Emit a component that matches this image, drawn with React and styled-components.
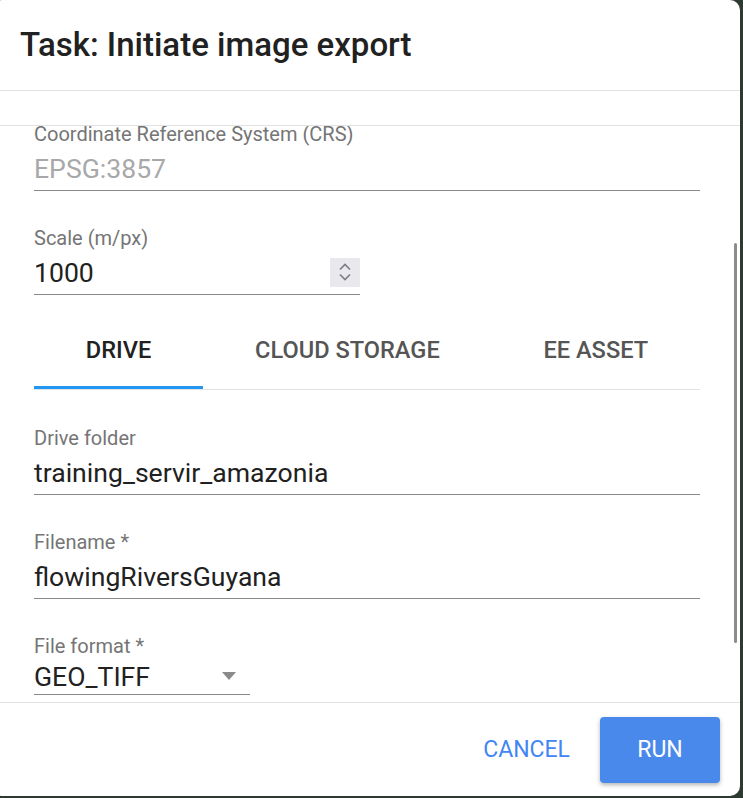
import styled, { createGlobalStyle } from "styled-components";

const GlobalStyle = createGlobalStyle`
  html, body {
    margin: 0;
    padding: 0;
    background: #2c3a31;
    font-family: Roboto, "Liberation Sans", sans-serif;
  }
`;

const fields = [
  { label: "Drive folder", value: "training_servir_amazonia" },
  { label: "Filename *", value: "flowingRiversGuyana" },
];

const tabs = ["DRIVE", "CLOUD STORAGE", "EE ASSET"];

export default function App() {
  return (
    <>
      <GlobalStyle />
      <Screen>
        <Dialog>
          <Header>
            <Title>Task: Initiate image export</Title>
          </Header>
          <Gap />
          <Body>
            <Scroller>
              <Field>
                <Label>Coordinate Reference System (CRS)</Label>
                <ValueRow>
                  <Value $disabled>EPSG:3857</Value>
                </ValueRow>
              </Field>

              <Field $narrow>
                <Label>Scale (m/px)</Label>
                <ValueRow>
                  <Value>1000</Value>
                  <Spinner>
                    <svg width="16" height="24" viewBox="0 0 16 24">
                      <path d="M3 9.5 L8 4.5 L13 9.5" fill="none" stroke="#7d7d85" strokeWidth="1.7" />
                      <path d="M3 14.5 L8 19.5 L13 14.5" fill="none" stroke="#7d7d85" strokeWidth="1.7" />
                    </svg>
                  </Spinner>
                </ValueRow>
              </Field>

              <TabBar>
                {tabs.map((t, i) => (
                  <Tab key={t} $active={i === 0}>
                    {t}
                  </Tab>
                ))}
              </TabBar>

              {fields.map((f) => (
                <Field key={f.label}>
                  <Label>{f.label}</Label>
                  <ValueRow>
                    <Value>{f.value}</Value>
                  </ValueRow>
                </Field>
              ))}

              <Field $select>
                <Label>File format *</Label>
                <SelectRow>
                  <Value>GEO_TIFF</Value>
                  <Arrow />
                </SelectRow>
              </Field>
            </Scroller>
            <ScrollThumb />
          </Body>
          <Footer>
            <TextButton>CANCEL</TextButton>
            <RunButton>RUN</RunButton>
          </Footer>
        </Dialog>
      </Screen>
    </>
  );
}

const Screen = styled.div`
  width: 743px;
  height: 798px;
  overflow: hidden;
  display: flex;
`;

const Dialog = styled.div`
  margin: 0 0 2px -8px;
  width: 748px;
  height: 796px;
  background: #ffffff;
  border-radius: 10px;
  overflow: hidden;
  display: flex;
  flex-direction: column;
  flex-shrink: 0;
`;

const Header = styled.div`
  height: 91px;
  box-sizing: border-box;
  padding-left: 28px;
  display: flex;
  align-items: center;
  border-bottom: 1px solid #e2e2e2;
`;

const Title = styled.h1`
  margin: 0;
  font-size: 33px;
  font-weight: 500;
  color: #212121;
  padding-bottom: 2px;
`;

const Gap = styled.div`
  height: 34px;
  flex-shrink: 0;
  border-bottom: 1px solid #e2e2e2;
`;

const Body = styled.div`
  flex: 1;
  position: relative;
  overflow: hidden;
  padding: 0 40px 0 42px;
`;

/* content is scrolled a few px down, so the first label sits under the edge */
const Scroller = styled.div`
  margin-top: -4px;
  display: flex;
  flex-direction: column;
`;

const Field = styled.div`
  width: ${(p) => (p.$narrow ? "326px" : p.$select ? "216px" : "100%")};
  margin-bottom: 35px;
`;

const Label = styled.div`
  height: 24px;
  line-height: 24px;
  font-size: 20px;
  color: #757575;
  white-space: nowrap;
`;

const ValueRow = styled.div`
  height: 44px;
  display: flex;
  align-items: center;
  justify-content: space-between;
  border-bottom: 1px solid #8a8a8a;
`;

const SelectRow = styled(ValueRow)`
  height: 36px;
`;

const Value = styled.div`
  font-size: 26.6px;
  color: ${(p) => (p.$disabled ? "#a8a8a8" : "#212121")};
  white-space: nowrap;
`;

const Spinner = styled.div`
  width: 30px;
  height: 29px;
  background: #e9e9ed;
  display: flex;
  align-items: center;
  justify-content: center;
`;

const Arrow = styled.div`
  width: 0;
  height: 0;
  margin-right: 14px;
  border-left: 7px solid transparent;
  border-right: 7px solid transparent;
  border-top: 8px solid #8a8a8a;
`;

const TabBar = styled.div`
  display: flex;
  margin-top: -19px;
  margin-bottom: 36px;
  border-bottom: 1px solid #e2e2e2;
`;

const Tab = styled.div`
  flex: 1 1 auto;
  height: 78px;
  box-sizing: border-box;
  display: flex;
  align-items: center;
  justify-content: center;
  padding-top: 2px;
  font-size: 23.6px;
  font-weight: 500;
  color: ${(p) => (p.$active ? "#212121" : "#555555")};
  border-bottom: 3px solid ${(p) => (p.$active ? "#2196f3" : "transparent")};
`;

const ScrollThumb = styled.div`
  position: absolute;
  right: 3px;
  top: 117px;
  width: 3px;
  height: 400px;
  background: #8c8c8c;
  border-radius: 2px;
`;

const Footer = styled.div`
  height: 94px;
  flex-shrink: 0;
  box-sizing: border-box;
  border-top: 1px solid #e2e2e2;
  display: flex;
  align-items: center;
  justify-content: flex-end;
  padding: 0 20px 0 0;
  gap: 14px;
`;

const TextButton = styled.button`
  border: none;
  background: none;
  font-family: inherit;
  font-size: 23px;
  color: #4285f4;
  padding: 0 16px;
  height: 66px;
`;

const RunButton = styled.button`
  border: none;
  width: 120px;
  height: 66px;
  border-radius: 4px;
  background: #4a89ec;
  color: #ffffff;
  font-family: inherit;
  font-size: 23px;
  box-shadow: 0 2px 4px rgba(0, 0, 0, 0.3);
`;
